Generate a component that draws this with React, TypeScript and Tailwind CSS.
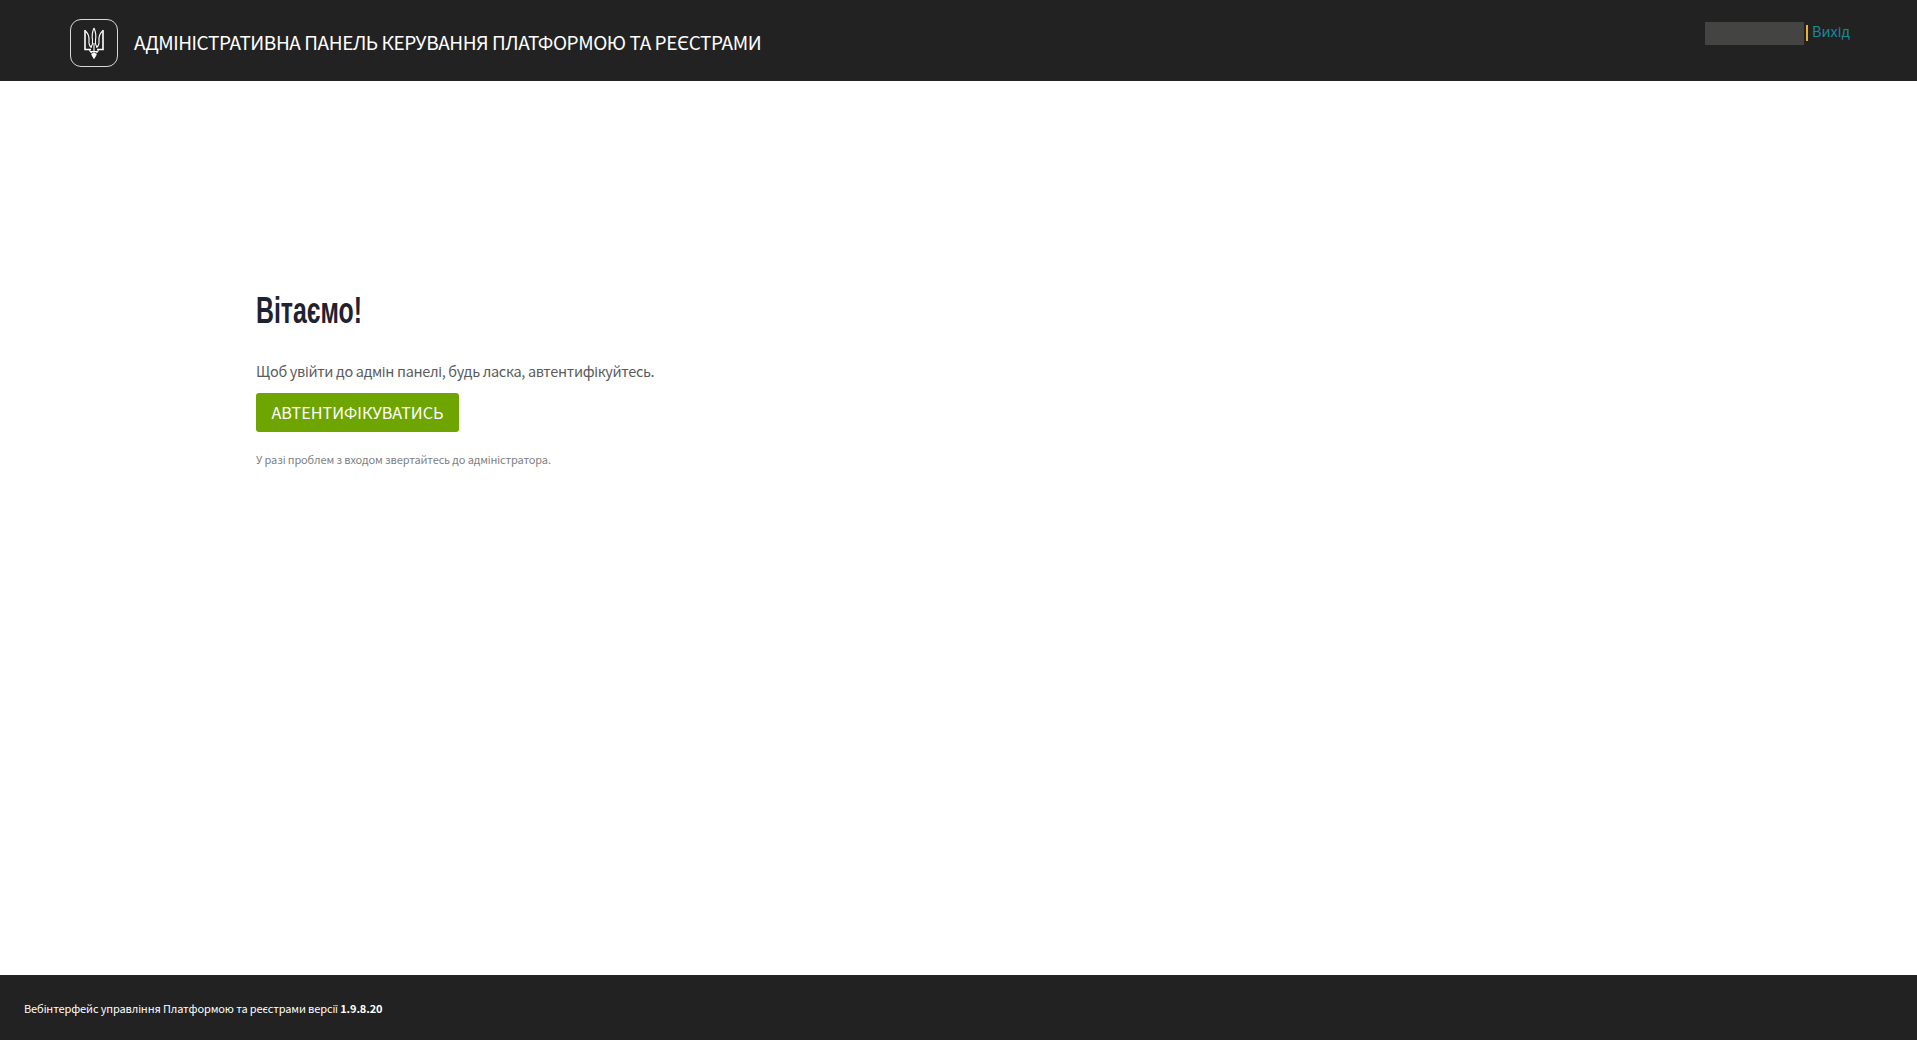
import React from 'react';

const Trident: React.FC = () => (
  <svg viewBox="0 0 20 32" className="w-[20px] h-[32px]" fill="none" stroke="#fff" strokeWidth="1.1">
    <path d="M1 3v19.500h6" strokeWidth="1.600" />
    <path d="M19 3v19.500h-6" strokeWidth="1.600" />
    <path d="M1.500 4c2.500 2.500 4 6 3.500 10-.3 2.500.5 5 2.500 6.500" />
    <path d="M18.500 4c-2.500 2.500-4 6-3.500 10 .3 2.500-.5 5-2.500 6.500" />
    <path d="M10 1c-1.800 4-2.200 8-1.500 12 .4 2.500 0 5-1.500 7.500M10 1c1.800 4 2.200 8 1.500 12-.4 2.500 0 5 1.500 7.500" />
    <path d="M5.500 22.500c.5 2.500 2.300 4 4.500 4s4-1.500 4.500-4" />
    <path d="M10 16v11" />
    <path d="M6.500 24.500h7" />
    <path d="M10 31.500 7.700 27.500h4.600z" fill="#fff" strokeWidth="1" />
  </svg>
);

const App: React.FC = () => {
  return (
    <div className="min-h-[1040px] flex flex-col bg-white font-['Noto_Sans_CJK_SC','Noto_Sans',sans-serif]">
      <header className="h-[81px] bg-[#222222] flex items-start justify-between pl-[70px] pr-[67px]">
        <div className="flex items-center gap-[16px] pt-[19px]">
          <div className="w-[48px] h-[48px] rounded-[11px] border border-[#d8d8d8] flex items-center justify-center">
            <Trident />
          </div>
          <span className="text-[19px] leading-[28px] tracking-[-0.42px] text-white -mt-[3px]">АДМІНІСТРАТИВНА ПАНЕЛЬ КЕРУВАННЯ ПЛАТФОРМОЮ ТА РЕЄСТРАМИ</span>
        </div>
        <div className="flex items-start pt-[22px]">
          <div className="w-[99px] h-[23px] bg-[#444442]"></div>
          <div className="w-[2px] h-[16px] bg-[#e3b23c] ml-[2px] mt-[3px]"></div>
          <a className="ml-[4px] text-[14.4px] leading-[20px] text-[#17889c] -mt-[1px]">Вихід</a>
        </div>
      </header>

      <main className="flex-1 pl-[256px] pt-[205px]">
        <h1 className="inline-block origin-left scale-x-[0.69] text-[36px] leading-[50px] font-bold text-[#1f2230] font-['Liberation_Sans',sans-serif]">Вітаємо!</h1>
        <p className="mt-[23px] text-[14.5px] leading-[24px] tracking-[-0.32px] text-[#5c5c5c]">Щоб увійти до адмін панелі, будь ласка, автентифікуйтесь.</p>
        <button className="block mt-[10px] h-[39px] w-[203px] rounded-[3px] bg-[#6ea500] pb-[1px] text-white text-[16.2px] leading-[24px]">АВТЕНТИФІКУВАТИСЬ</button>
        <p className="mt-[18px] text-[11px] leading-[18px] tracking-[-0.12px] text-[#7f7f7f]">У разі проблем з входом звертайтесь до адміністратора.</p>
      </main>

      <footer className="h-[65px] bg-[#222222] flex items-center pl-[24px]">
        <span className="text-[11px] leading-[18px] tracking-[-0.12px] text-white">Вебінтерфейс управління Платформою та реєстрами версії <b className="font-bold">1.9.8.20</b></span>
      </footer>
    </div>
  );
};

export default App;
